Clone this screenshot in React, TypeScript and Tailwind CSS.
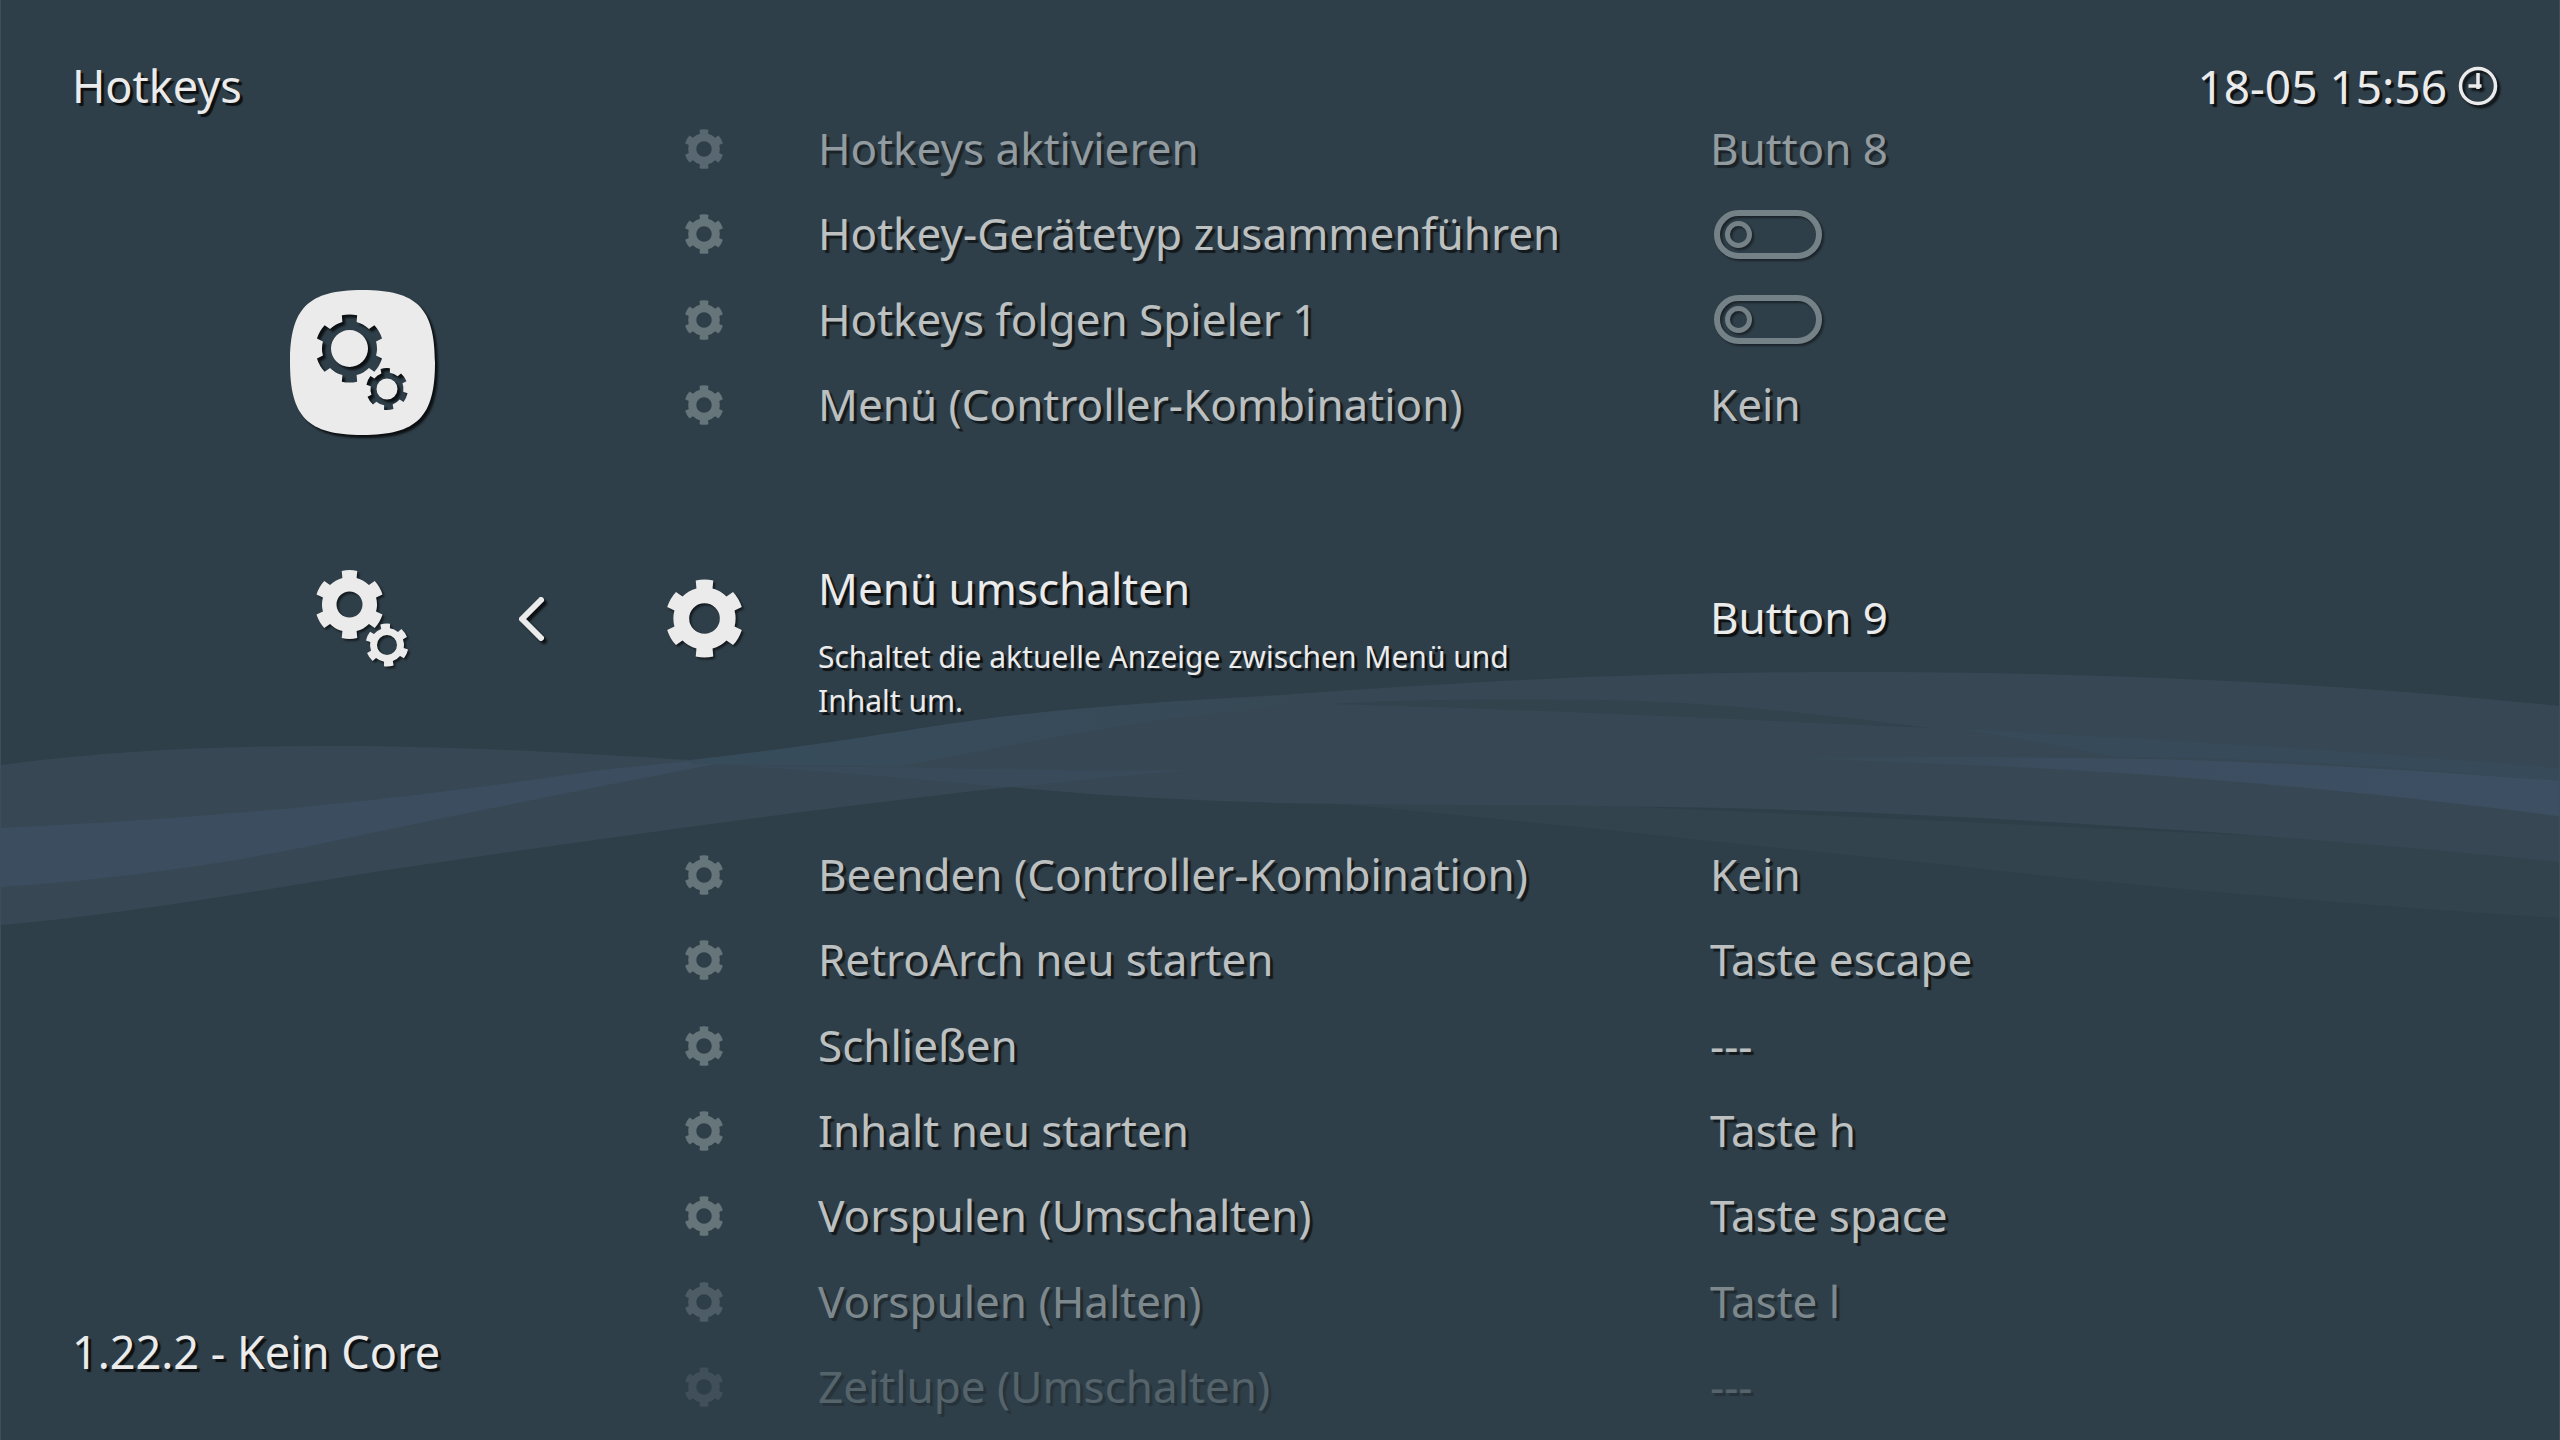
import type { ReactNode } from "react";

const toothed = (
  cx: number,
  cy: number,
  outer: number,
  body: number,
  hole: number,
  turn = 0,
) => {
  const at = (r: number, deg: number) => {
    const a = ((deg + turn - 90) * Math.PI) / 180;
    return `${(cx + r * Math.cos(a)).toFixed(2)} ${(cy + r * Math.sin(a)).toFixed(2)}`;
  };
  let d = "";
  for (let i = 0; i < 6; i++) {
    const mid = i * 60;
    d += `${i === 0 ? "M" : "L"}${at(body, mid - 15)}L${at(outer, mid - 13)}`;
    d += `A${outer} ${outer} 0 0 1 ${at(outer, mid + 13)}L${at(body, mid + 15)}`;
    d += `A${body} ${body} 0 0 1 ${at(body, mid + 45)}`;
  }
  d += `ZM${cx - hole} ${cy}a${hole} ${hole} 0 1 0 ${2 * hole} 0a${hole} ${hole} 0 1 0 ${-2 * hole} 0Z`;
  return d;
};

const GEAR = toothed(40, 40, 39.5, 31.5, 15.5);

function Gear({ className }: { className: string }) {
  return (
    <svg viewBox="0 0 80 80" aria-hidden="true" className={className}>
      <path d={GEAR} fill="currentColor" fillRule="evenodd" />
    </svg>
  );
}

function InputTile() {
  const cogs = toothed(59.5, 58.5, 34, 27.5, 18.5) + toothed(97, 99, 21, 16.5, 10.5, -5);
  return (
    <svg
      viewBox="0 0 145 145"
      aria-hidden="true"
      className="size-[145px] overflow-visible drop-shadow-[3px_3px_1px_rgba(0,0,0,0.75)]"
    >
      <path
        fillRule="evenodd"
        fill="#ebebeb"
        d={`M72.5 0C127 0 145 18 145 72.5S127 145 72.5 145S0 127 0 72.5S18 0 72.5 0Z${cogs}`}
      />
    </svg>
  );
}

function Cogs() {
  return (
    <svg
      viewBox="0 0 145 145"
      aria-hidden="true"
      className="size-[145px] drop-shadow-[2px_2px_1px_rgba(0,0,0,0.6)]"
    >
      <path
        fillRule="evenodd"
        fill="#ebebeb"
        d={toothed(59.5, 58.5, 34.5, 27.5, 13)}
      />
      <path fillRule="evenodd" fill="#ebebeb" d={toothed(97, 99, 21.5, 17, 10, -5)} />
    </svg>
  );
}

function Ribbon() {
  return (
    <svg
      viewBox="0 0 2560 1440"
      preserveAspectRatio="none"
      aria-hidden="true"
      className="absolute inset-0 -z-10 size-full"
    >
      <defs>
        <linearGradient id="sheen" x1="0" x2="1">
          <stop offset="0" stopColor="#374c5b" />
          <stop offset="0.5" stopColor="#374b5a" />
          <stop offset="1" stopColor="#374b5a" stopOpacity="0" />
        </linearGradient>
        <linearGradient id="crest" x1="0" x2="1">
          <stop offset="0" stopColor="#3b4d5f" stopOpacity="0" />
          <stop offset="0.4" stopColor="#3b4d5f" />
          <stop offset="1" stopColor="#3d4f62" />
        </linearGradient>
      </defs>
      <path
        fill="#32434d"
        d="M1280 800C1400 808 1500 820 1600 829C1740 845 1880 857 2000 871C2200 892 2400 908 2560 918V850L1280 790Z"
      />
      <path
        fill="#374854"
        d="M0 765C110 750 220 746 330 746C470 746 580 754 690 760C850 742 900 730 1000 717C1100 705 1190 700 1280 695C1480 681 1640 672 1850 672C2100 672 2330 682 2560 706V862C2300 836 2080 822 1850 812C1650 804 1450 806 1280 803C1180 800 1100 796 1010 787C820 808 600 838 400 868C260 890 120 915 0 925Z"
      />
      <path
        fill="#32434d"
        d="M1330 704C1420 699 1500 699 1600 700C1700 702 1790 710 1930 728C1750 720 1500 708 1330 704Z"
      />
      <path
        fill="#3c4d60"
        d="M0 828C220 818 400 800 600 770L700 760L725 762C570 792 470 812 300 848C200 868 100 880 0 887Z"
      />
      <path
        fill="url(#sheen)"
        d="M690 760C850 742 900 730 1000 717C1100 705 1190 700 1280 697L1330 704C1180 710 1040 740 900 766L690 764Z"
      />
      <path fill="#394b5b" d="M740 766C900 766 1050 772 1200 770C1130 774 1070 782 1010 787C920 780 840 772 740 766Z" />
      <path
        fill="#374a59"
        d="M1960 729C2140 738 2340 750 2560 768V782C2400 766 2260 758 2120 757C2060 746 2010 737 1960 729Z"
      />
      <path
        fill="url(#crest)"
        d="M1765 758C1900 757 2020 757 2150 759C2300 763 2430 771 2560 781V816C2400 796 2200 774 1950 764C1880 761 1820 760 1765 758Z"
      />
    </svg>
  );
}

type Tone = "full" | "soft" | "fade" | "ghost";

const tones: Record<Tone, string> = {
  full: "text-[#bcc0c0] [text-shadow:3px_3px_1px_rgba(0,0,0,0.6)]",
  soft: "text-[#929b9f] [text-shadow:3px_3px_1px_rgba(0,0,0,0.45)]",
  fade: "text-[#7d888d] [text-shadow:3px_3px_1px_rgba(0,0,0,0.35)]",
  ghost: "text-[#55636b] [text-shadow:3px_3px_1px_rgba(0,0,0,0.2)]",
};

const gearTones: Record<Tone, string> = {
  full: "text-[#66757a]",
  soft: "text-[#596870]",
  fade: "text-[#4d5c65]",
  ghost: "text-[#404f59]",
};

type Item = { name: string; value: string | boolean; tone: Tone };

const before: Item[] = [
  { name: "Hotkeys aktivieren", value: "Button 8", tone: "soft" },
  { name: "Hotkey-Gerätetyp zusammenführen", value: false, tone: "full" },
  { name: "Hotkeys folgen Spieler 1", value: false, tone: "full" },
  { name: "Menü (Controller-Kombination)", value: "Kein", tone: "full" },
];

const after: Item[] = [
  { name: "Beenden (Controller-Kombination)", value: "Kein", tone: "full" },
  { name: "RetroArch neu starten", value: "Taste escape", tone: "full" },
  { name: "Schließen", value: "---", tone: "full" },
  { name: "Inhalt neu starten", value: "Taste h", tone: "full" },
  { name: "Vorspulen (Umschalten)", value: "Taste space", tone: "full" },
  { name: "Vorspulen (Halten)", value: "Taste l", tone: "fade" },
  { name: "Zeitlupe (Umschalten)", value: "---", tone: "ghost" },
];

const rowClass = "flex w-full items-center text-left whitespace-nowrap [text-shadow:inherit]";

function Cells({ icon, name, value }: { icon: ReactNode; name: ReactNode; value: ReactNode }) {
  return (
    <>
      <span className="flex w-[156px] shrink-0 justify-center">{icon}</span>
      <span className="ml-[36px] w-[892px] shrink-0 pb-[2px]">{name}</span>
      {typeof value === "string" ? <span className="pb-[2px]">{value}</span> : value}
    </>
  );
}

function Row({ item }: { item: Item }) {
  const gear = <Gear className={`size-[40px] ${gearTones[item.tone]}`} />;
  return (
    <li className={`flex flex-1 ${tones[item.tone]}`}>
      {typeof item.value === "boolean" ? (
        <label className={rowClass}>
          <Cells
            icon={gear}
            name={item.name}
            value={
              <input
                type="checkbox"
                role="switch"
                defaultChecked={item.value}
                className="ml-1 flex h-[49px] w-[108px] appearance-none items-center rounded-full border-[6px] border-[#748186] px-[5px] drop-shadow-[2px_2px_1px_rgba(0,0,0,0.45)] before:size-[27px] before:rounded-full before:border-[5px] before:border-[#748186] checked:justify-end"
              />
            }
          />
        </label>
      ) : (
        <button type="button" className={rowClass}>
          <Cells icon={gear} name={item.name} value={item.value} />
        </button>
      )}
    </li>
  );
}

export default function App() {
  return (
    <div className="relative isolate flex h-screen min-h-[1100px] overflow-hidden border-x border-[#3b4e5c] bg-[#2f3f49] font-['Noto_Sans',sans-serif] text-[44px] leading-[60px] text-[#ebebeb] [text-shadow:3px_3px_1px_rgba(0,0,0,0.75)]">
      <Ribbon />

      <aside className="flex w-[625px] shrink-0 flex-col justify-between pt-[56px] pb-[58px] pl-[71px]">
        <h1 className="text-[45px]">Hotkeys</h1>
        <nav className="mb-auto flex flex-col pt-[174px] pl-[218px]">
          <InputTile />
          <div className="mt-[111px] flex items-center">
            <button type="button" aria-label="Eingabe">
              <Cogs />
            </button>
            <button type="button" aria-label="Zurück" className="ml-[83px]">
              <svg
                viewBox="0 0 28 46"
                aria-hidden="true"
                className="h-[46px] w-[28px] drop-shadow-[3px_3px_1px_rgba(0,0,0,0.75)]"
              >
                <path
                  d="M23 4 4 23 23 42"
                  fill="none"
                  stroke="#ebebeb"
                  strokeWidth="6"
                  strokeLinecap="round"
                  strokeLinejoin="round"
                />
              </svg>
            </button>
          </div>
        </nav>
        <p className="text-[45px]">1.22.2 - Kein Core</p>
      </aside>

      <main className="flex flex-1 pt-[106px] pb-[10px]">
        <ul className="flex flex-1 flex-col">
          {before.map((item) => (
            <Row key={item.name} item={item} />
          ))}
          <li className="flex flex-[4.5]">
            <button type="button" className={`${rowClass} pb-[43px]`}>
              <Cells
                icon={
                  <Gear className="size-[79px] drop-shadow-[2px_2px_1px_rgba(0,0,0,0.6)]" />
                }
                name={
                  <span className="flex flex-col pt-[46px]">
                    <span>Menü umschalten</span>
                    <span className="mt-[17px] text-[30px] leading-[44px]">
                      Schaltet die aktuelle Anzeige zwischen Menü und
                      <br />
                      Inhalt um.
                    </span>
                  </span>
                }
                value="Button 9"
              />
            </button>
          </li>
          {after.map((item) => (
            <Row key={item.name} item={item} />
          ))}
        </ul>
      </main>

      <time className="absolute top-[56px] right-[61px] flex items-center gap-[11px] text-[46px]">
        18-05 15:56
        <svg
          viewBox="0 0 40 40"
          aria-hidden="true"
          className="size-[40px] drop-shadow-[3px_3px_1px_rgba(0,0,0,0.75)]"
        >
          <g fill="none" stroke="#ebebeb" strokeWidth="3.5">
            <circle cx="20" cy="20" r="17.5" />
            <path d="M20 7V23M10.5 20H23.5" />
          </g>
        </svg>
      </time>
    </div>
  );
}
